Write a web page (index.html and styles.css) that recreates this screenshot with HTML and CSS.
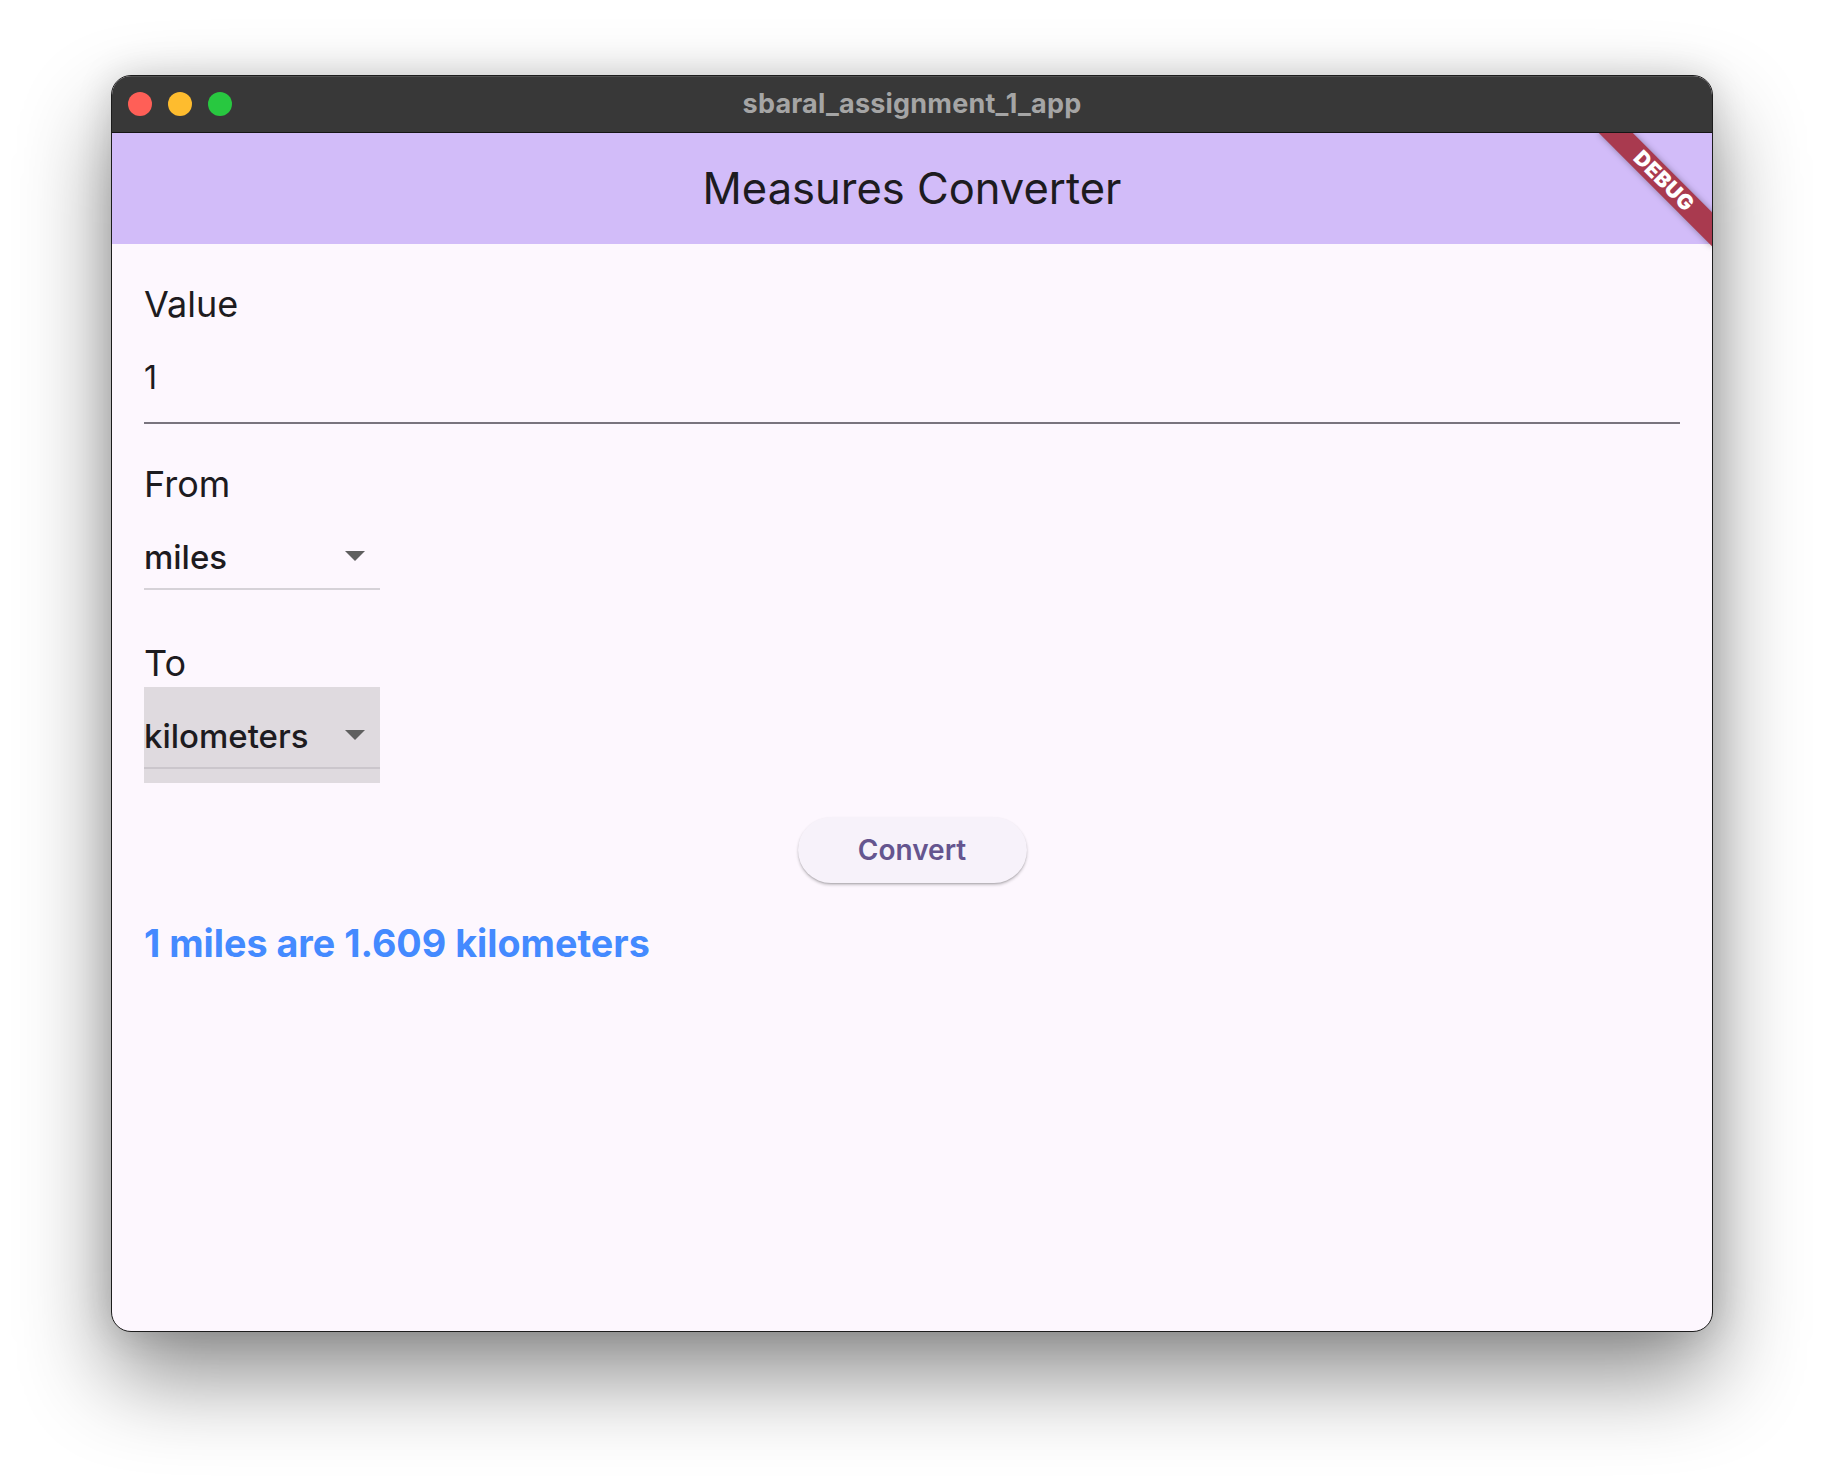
FILE: index.html
```
<!DOCTYPE html>
<html>
<head>
<meta charset="utf-8">
<link rel="stylesheet" href="styles.css">
</head>
<body>
<div class="window">
  <div class="titlebar">
    <div class="lights">
      <span class="light red"></span>
      <span class="light yellow"></span>
      <span class="light green"></span>
    </div>
    <div class="wintitle">sbaral_assignment_1_app</div>
  </div>
  <div class="app">
    <div class="appbar">Measures Converter</div>
    <div class="content">
      <div class="label">Value</div>
      <div class="field">1</div>
      <div class="label from">From</div>
      <div class="dd">
        <div class="dd-row">
          <span class="dd-text">miles</span>
          <svg class="dd-icon" viewBox="0 0 24 24" width="48" height="48"><path d="M7 10l5 5 5-5z" fill="#5f5f5f"/></svg>
        </div>
        <div class="dd-line"></div>
      </div>
      <div class="label to">To</div>
      <div class="dd focused">
        <div class="dd-row">
          <span class="dd-text">kilometers</span>
          <svg class="dd-icon" viewBox="0 0 24 24" width="48" height="48"><path d="M7 10l5 5 5-5z" fill="#5f5f5f"/></svg>
        </div>
        <div class="dd-line"></div>
      </div>
      <div class="btn-row"><button class="btn">Convert</button></div>
      <div class="result">1 miles are 1.609 kilometers</div>
    </div>
    <div class="banner">DEBUG</div>
  </div>
</div>
</body>
</html>
```
FILE: styles.css
```
html, body {
  margin: 0;
  padding: 0;
  background: #ffffff;
}
body {
  width: 1824px;
  height: 1480px;
  padding-top: 75px;
  padding-left: 111px;
  box-sizing: border-box;
  font-family: Inter, "Noto Sans", sans-serif;
}
.window {
  width: 1602px;
  height: 1257px;
  box-sizing: border-box;
  border: 1px solid #1c1c1c;
  border-radius: 20px;
  overflow: hidden;
  background: #fdf7fe;
  box-shadow: 0 44px 90px rgba(0,0,0,0.45), 0 0 36px rgba(0,0,0,0.14);
  display: flex;
  flex-direction: column;
}
.titlebar {
  height: 56px;
  flex: none;
  background: #383838;
  border-bottom: 1px solid #151515;
  box-shadow: inset 0 1px 0 rgba(255,255,255,0.12);
  position: relative;
  display: flex;
  align-items: center;
  justify-content: center;
}
.lights {
  position: absolute;
  left: 16px;
  top: 16px;
  display: flex;
  gap: 16px;
}
.light {
  width: 24px;
  height: 24px;
  border-radius: 50%;
  display: block;
}
.red { background: #ff5f57; }
.yellow { background: #febc2e; }
.green { background: #28c840; }
.wintitle {
  color: #a5a5a5;
  font-weight: 700;
  font-size: 27px;
  letter-spacing: 0.2px;
  margin-top: -2px;
}
.app {
  flex: 1;
  position: relative;
  overflow: hidden;
  display: flex;
  flex-direction: column;
}
.appbar {
  height: 111px;
  flex: none;
  background: #d2bcf9;
  color: #1d1b20;
  font-size: 43.5px;
  display: flex;
  align-items: center;
  justify-content: center;
  padding-bottom: 2px;
  box-sizing: border-box;
}
.content {
  padding: 38px 32px 0;
  color: #1d1b20;
}
.label {
  font-size: 36px;
  line-height: 44px;
}
.field {
  font-size: 32px;
  line-height: 40px;
  padding: 32px 0 24px;
  border-bottom: 2px solid #79747e;
}
.label.from {
  margin-top: 38px;
  margin-bottom: 2px;
}
.label.to {
  margin-top: 37px;
  margin-bottom: 2px;
}
.dd {
  width: 236px;
  height: 96px;
}
.dd.focused {
  background: #dfdadf;
}
.dd-row {
  height: 80px;
  display: flex;
  align-items: flex-start;
}
.dd-text {
  font-size: 33px;
  line-height: 40px;
  margin-top: 29px;
  font-weight: 500;
}
.dd-icon {
  margin-left: auto;
  margin-top: 23px;
  margin-right: 1px;
}
.dd-line {
  height: 2px;
  background: #d6d2d8;
}
.dd.focused .dd-line {
  background: #cbc6cc;
}
.btn-row {
  display: flex;
  justify-content: center;
  margin-top: 34px;
}
.btn {
  width: 229px;
  height: 66px;
  border: none;
  border-radius: 33px;
  background: #f7f2fa;
  color: #65558f;
  font-family: Inter, "Noto Sans", sans-serif;
  font-size: 28px;
  font-weight: 600;
  box-shadow: 0 2px 3px rgba(0,0,0,0.22), 0 1px 1px rgba(0,0,0,0.1);
  padding: 0;
}
.result {
  margin-top: 37px;
  font-size: 37.7px;
  line-height: 46px;
  font-weight: 700;
  color: #448aff;
}
.banner {
  position: absolute;
  top: 56px;
  right: -80px;
  width: 160px;
  height: 24px;
  transform-origin: 80px -56px;
  transform: rotate(45deg);
  background: #a93a4f;
  box-shadow: 0 0 6px rgba(0,0,0,0.35);
  color: #ffffff;
  font-size: 21px;
  font-weight: 900;
  line-height: 24px;
  letter-spacing: 0.5px;
  text-align: center;
}
```
